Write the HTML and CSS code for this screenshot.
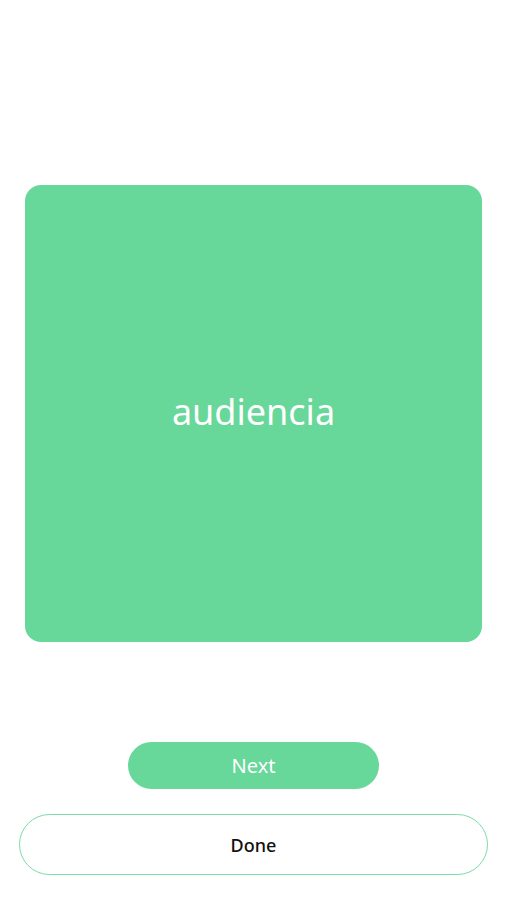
FILE: index.html
```html
<!DOCTYPE html>
<html lang="es">
<head>
    <meta charset="UTF-8">
    <meta name="viewport" content="width=device-width, initial-scale=1.0">
    <title>Tarjetas</title>
    <link rel="stylesheet" href="styles.css">
</head>
<body>

<div class="screen">
    <div class="card">
        <span class="word">audiencia</span>
    </div>

    <div class="actions">
        <button class="btn-next">Next</button>
        <button class="btn-done">Done</button>
    </div>
</div>

</body>
</html>
```

FILE: styles.css
```css
body {
    font-family: "Noto Sans", Lato, sans-serif;
    background-color: #ffffff;
    margin: 0;
    padding: 0;
}
.screen {
    display: flex;
    flex-direction: column;
    height: 900px;
    padding-top: 185px;
    box-sizing: border-box;
}
.card {
    margin: 0 25px;
    height: 457px;
    background-color: #67d79a;
    border-radius: 16px;
    display: flex;
    align-items: center;
    justify-content: center;
}
.card .word {
    color: white;
    font-size: 36px;
    margin-top: -4px;
}
.actions {
    display: flex;
    flex-direction: column;
    align-items: center;
    margin-top: 100px;
}
.btn-next {
    width: 251px;
    height: 47px;
    border: none;
    border-radius: 24px;
    background-color: #67d79a;
    color: white;
    font-family: inherit;
    font-size: 20px;
    cursor: pointer;
}
.btn-done {
    width: 469px;
    height: 61px;
    margin-top: 25px;
    border: 1px solid #7ddba8;
    border-radius: 31px;
    background-color: white;
    color: #111111;
    font-family: inherit;
    font-size: 18px;
    font-weight: 500;
    cursor: pointer;
}
```
